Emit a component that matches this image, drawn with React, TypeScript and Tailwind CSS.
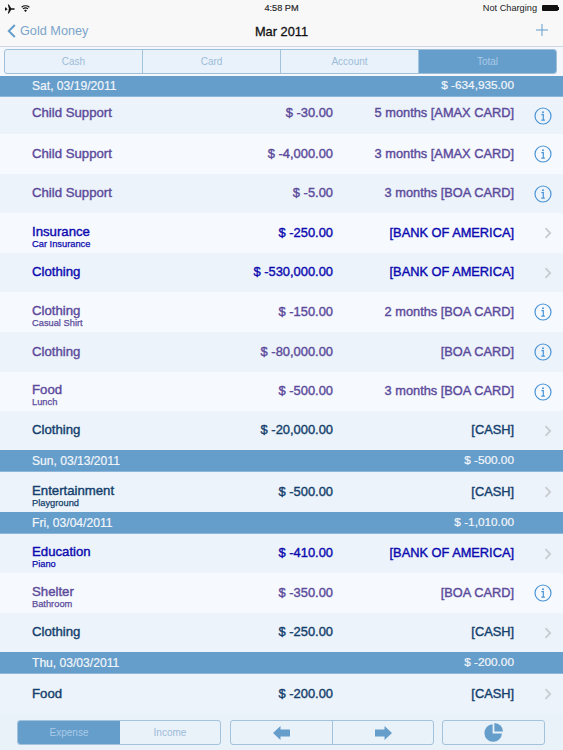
const F = "[font-family:'Liberation_Sans',Arial,sans-serif]";

type Row = { name: string; sub?: string; amt: string; acc: string; color: string; info?: boolean; h: string; first?: boolean };
const P = "text-[#5c4b9b]";
const B = "text-[#0d0bb0]";
const N = "text-[#143f6d]";

type Sec = { date: string; total: string; h: string; rows: Row[] };

const sections: Sec[] = [
  {
    date: "Sat, 03/19/2011",
    total: "$ -634,935.00",
    h: "h-[21px]",
    rows: [
      { name: "Child Support", amt: "$ -30.00", acc: "5 months [AMAX CARD]", color: P, info: true, h: "h-[37px]", first: true },
      { name: "Child Support", amt: "$ -4,000.00", acc: "3 months [AMAX CARD]", color: P, info: true, h: "h-[40px]" },
      { name: "Child Support", amt: "$ -5.00", acc: "3 months [BOA CARD]", color: P, info: true, h: "h-[39px]" },
      { name: "Insurance", sub: "Car Insurance", amt: "$ -250.00", acc: "[BANK OF AMERICA]", color: B, h: "h-[40px]" },
      { name: "Clothing", amt: "$ -530,000.00", acc: "[BANK OF AMERICA]", color: B, h: "h-[39px]" },
      { name: "Clothing", sub: "Casual Shirt", amt: "$ -150.00", acc: "2 months [BOA CARD]", color: P, info: true, h: "h-[40px]" },
      { name: "Clothing", amt: "$ -80,000.00", acc: "[BOA CARD]", color: P, info: true, h: "h-[40px]" },
      { name: "Food", sub: "Lunch", amt: "$ -500.00", acc: "3 months [BOA CARD]", color: P, info: true, h: "h-[39px]" },
      { name: "Clothing", amt: "$ -20,000.00", acc: "[CASH]", color: N, h: "h-[39px]" },
    ],
  },
  {
    date: "Sun, 03/13/2011",
    total: "$ -500.00",
    h: "h-[22px] pt-px",
    rows: [{ name: "Entertainment", sub: "Playground", amt: "$ -500.00", acc: "[CASH]", color: N, h: "h-[40px]" }],
  },
  {
    date: "Fri, 03/04/2011",
    total: "$ -1,010.00",
    h: "h-[22px] pt-px",
    rows: [
      { name: "Education", sub: "Piano", amt: "$ -410.00", acc: "[BANK OF AMERICA]", color: B, h: "h-[39px]" },
      { name: "Shelter", sub: "Bathroom", amt: "$ -350.00", acc: "[BOA CARD]", color: P, info: true, h: "h-[40px]" },
      { name: "Clothing", amt: "$ -250.00", acc: "[CASH]", color: N, h: "h-[39px]" },
    ],
  },
  {
    date: "Thu, 03/03/2011",
    total: "$ -200.00",
    h: "h-[22px] pt-px",
    rows: [{ name: "Food", amt: "$ -200.00", acc: "[CASH]", color: N, h: "h-[40px]" }],
  },
];

function Info() {
  return (
    <svg width="18" height="18" viewBox="0 0 18 18" fill="none">
      <circle cx="9" cy="9" r="8" stroke="#4a94d6" strokeWidth="1.2" />
      <circle cx="9" cy="5.2" r="1" fill="#4a94d6" />
      <path d="M7.4 7.7H9.3V13M7.3 13.2H10.9" stroke="#4a94d6" strokeWidth="1.2" />
    </svg>
  );
}

function Chevron() {
  return (
    <svg width="8" height="12" viewBox="0 0 8 12" fill="none">
      <path d="M1.5 1.2L6.2 6L1.5 10.8" stroke="#c9ccd0" strokeWidth="1.8" />
    </svg>
  );
}

function Section({ s }: { s: Sec }) {
  return (
    <div className="flex flex-col">
      <div className={`${s.h} bg-[#659dcb] flex items-center text-[#f2f6fa] border-b border-[#8db7da] [-webkit-text-stroke:0.2px]`}>
        <div className="w-[200px] pl-8 text-[12.1px]">{s.date}</div>
        <div className="w-[314px] text-right text-[11.8px]">{s.total}</div>
      </div>
      {s.rows.map((r, i) => {
        const off = r.first ? "-top-[3px]" : "-top-[1px]";
        return (
          <div
            key={i}
            className={`${r.h} flex items-center ${i % 2 === 0 ? "bg-[#ecf3fa]" : "bg-[#f6f9fe]"} ${r.color} leading-[15px] font-medium [-webkit-text-stroke:0.4px]`}
          >
            <div className={`w-[200px] pl-8 relative ${r.sub ? "top-[3px]" : off}`}>
              <div className="text-[13.2px]">{r.name}</div>
              {r.sub && <div className="text-[9.3px] leading-[10px] [-webkit-text-stroke:0.25px]">{r.sub}</div>}
            </div>
            <div className={`w-[133px] text-right text-[12.9px] relative ${off}`}>{r.amt}</div>
            <div className={`w-[181px] text-right text-[12.8px] relative ${off}`}>{r.acc}</div>
            <div className="w-[49px] flex justify-end pr-[11px]">{r.info ? <Info /> : <Chevron />}</div>
          </div>
        );
      })}
    </div>
  );
}

function Seg({ children, active, last, className }: { children?: React.ReactNode; active?: boolean; last?: boolean; className?: string }) {
  return (
    <div
      className={`flex items-center justify-center h-full ${className ?? ""} ${active ? "bg-[#659dcb] text-[#a9cbe8]" : "text-[#9dbcd8]"} ${last ? "" : "border-r border-[#a3c2dc]"}`}
    >
      {children}
    </div>
  );
}

export default function App() {
  return (
    <div className={`w-[563px] h-[750px] overflow-hidden bg-[#ecf3fa] flex flex-col ${F}`}>
      <div className="h-[47px] bg-[#f8f8f8] border-b border-[#cfd8e0] flex flex-col">
        <div className="h-[17px] flex items-center justify-between pl-[5px] pr-[4px] text-[9.2px] text-[#222] relative">
          <div className="flex items-center gap-[6px]">
            <svg width="10" height="10" viewBox="0 0 10 10" fill="#111">
              <path d="M0 3.6L1 3.6L2.2 5H4L2.8 0.5H3.9L6.2 4.2H9C10 4.2 10 5.8 9 5.8H6.2L3.9 9.5H2.8L4 5.2H2.2L1 6.4H0Z" />
            </svg>
            <svg width="9" height="8" viewBox="0 0 9 8" fill="none" stroke="#111">
              <path d="M0.6 2.2C2.8 0.4 6.2 0.4 8.4 2.2" strokeWidth="1.1" />
              <path d="M2 3.9C3.4 2.8 5.6 2.8 7 3.9" strokeWidth="1.1" />
              <path d="M3.4 5.4C4 4.9 5 4.9 5.6 5.4L4.5 6.8Z" fill="#111" strokeWidth="0.5" />
            </svg>
          </div>
          <div className="absolute left-0 right-0 text-center font-medium [-webkit-text-stroke:0.15px]">4:58 PM</div>
          <div className="flex items-center gap-[5px]">
            <span>Not Charging</span>
            <span className="flex items-center">
              <span className="w-[16px] h-[6px] bg-[#111] rounded-[1px]" />
              <span className="w-[1px] h-[3px] bg-[#111]" />
            </span>
          </div>
        </div>
        <div className="flex-1 flex items-center relative">
          <div className="flex items-center pl-[7px] gap-[4px] text-[12.7px] text-[#7ba5cb]">
            <svg width="9" height="14" viewBox="0 0 9 14" fill="none">
              <path d="M7.8 1L1.8 7L7.8 13" stroke="#659dcb" strokeWidth="2" />
            </svg>
            <span>Gold Money</span>
          </div>
          <div className="absolute left-0 right-0 text-center text-[12.8px] text-[#111] font-medium [-webkit-text-stroke:0.3px]">Mar 2011</div>
          <div className="absolute right-[15px] top-[7px]">
            <svg width="12" height="12" viewBox="0 0 12 12" stroke="#659dcb" strokeWidth="1">
              <path d="M6 0V12M0 6H12" />
            </svg>
          </div>
        </div>
      </div>

      <div className="h-[29px] pt-[2px] px-1 bg-[#f4f7fb]">
        <div className="h-[25px] w-[553px] flex rounded-[3px] border border-[#9fbfd9] overflow-hidden bg-[#e9f2fa] text-[10px]">
          <Seg className="w-[138px]">Cash</Seg>
          <Seg className="w-[138px]">Card</Seg>
          <Seg className="w-[138px]">Account</Seg>
          <Seg className="flex-1" active last>Total</Seg>
        </div>
      </div>

      {sections.map((s) => (
        <Section key={s.date} s={s} />
      ))}

      <div className="flex-1 flex items-start pt-[6px] pl-[17px] bg-[#e9f1f9]">
        <div className="w-[204px] h-[25px] flex rounded-[3px] border border-[#a3c2dc] overflow-hidden text-[10px]">
          <Seg className="w-[102px]" active last>Expense</Seg>
          <Seg className="flex-1" last>Income</Seg>
        </div>
        <div className="ml-[9px] w-[204px] h-[25px] flex rounded-[3px] border border-[#a3c2dc] overflow-hidden">
          <Seg className="w-[102px]">
            <svg width="17" height="14" viewBox="0 0 17 14" fill="#659dcb"><path d="M0 7L7.5 0V3.5H17V10.5H7.5V14Z" /></svg>
          </Seg>
          <Seg className="flex-1" last>
            <svg width="17" height="14" viewBox="0 0 17 14" fill="#659dcb"><path d="M17 7L9.5 0V3.5H0V10.5H9.5V14Z" /></svg>
          </Seg>
        </div>
        <div className="ml-[8px] w-[103px] h-[25px] flex items-center justify-center rounded-[3px] border border-[#a3c2dc]">
          <svg width="19" height="19" viewBox="0 0 19 19" fill="#659dcb">
            <path d="M8.6 1.2A8.8 8.8 0 1 0 18 10.6H8.6Z" />
            <path d="M10.4 0A8.6 8.6 0 0 1 19 8.6H10.4Z" />
          </svg>
        </div>
      </div>
    </div>
  );
}
